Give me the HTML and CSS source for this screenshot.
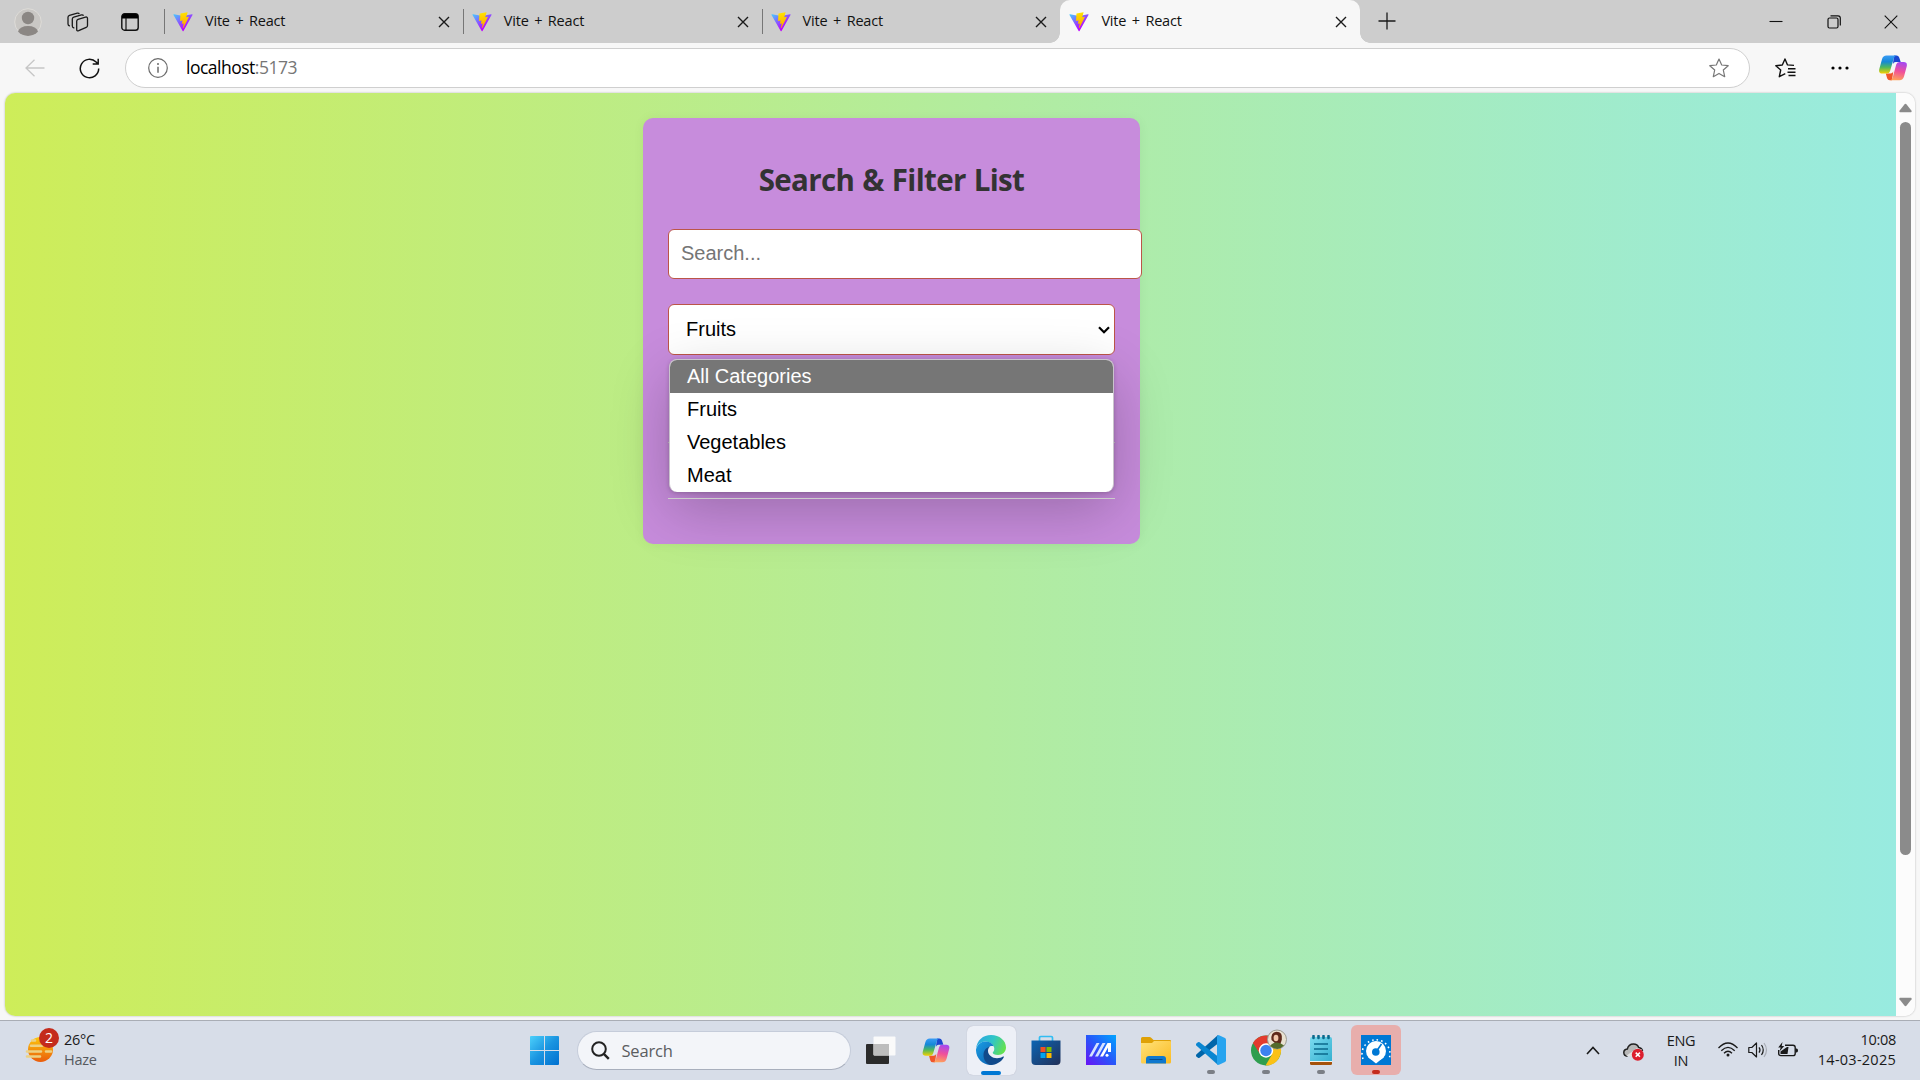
FILE: index.html
```html
<!DOCTYPE html>
<html lang="en">
<head>
<meta charset="utf-8">
<title>Vite + React</title>
<link rel="stylesheet" href="styles.css">
</head>
<body>
<svg class="defs" width="0" height="0">
  <defs>
    <linearGradient id="viteA" x1="6" y1="33" x2="235" y2="344" gradientUnits="userSpaceOnUse"><stop stop-color="#41d1ff"/><stop offset="1" stop-color="#bd00ff"/></linearGradient>
    <linearGradient id="viteB" x1="194" y1="9" x2="236" y2="292" gradientUnits="userSpaceOnUse"><stop stop-color="#ffea00"/><stop offset=".1" stop-color="#ffdd00"/><stop offset="1" stop-color="#ffa800"/></linearGradient>
    <linearGradient id="copA" x1="0" y1="0" x2="0" y2="1"><stop stop-color="#3a9cf5"/><stop offset=".35" stop-color="#1588d8"/><stop offset=".65" stop-color="#4cb860"/><stop offset="1" stop-color="#f5d000"/></linearGradient>
    <linearGradient id="copB" x1=".6" y1="0" x2=".4" y2="1"><stop stop-color="#a548f0"/><stop offset=".5" stop-color="#f0509a"/><stop offset="1" stop-color="#ffa35a"/></linearGradient>
    <linearGradient id="winG" x1="0" y1="0" x2="1" y2="1"><stop stop-color="#4cd0fb"/><stop offset=".5" stop-color="#1a94e0"/><stop offset="1" stop-color="#0070d0"/></linearGradient>
    <linearGradient id="edgeTop" x1="0" y1=".3" x2="1" y2=".6"><stop stop-color="#2ba6e0"/><stop offset=".5" stop-color="#2fc5c8"/><stop offset="1" stop-color="#66e24a"/></linearGradient>
    <linearGradient id="edgeLow" x1="0" y1="0" x2="1" y2="1"><stop stop-color="#1b9fe5"/><stop offset="1" stop-color="#0a57a8"/></linearGradient>
    <linearGradient id="storeG" x1="0" y1="0" x2="1" y2="1"><stop stop-color="#0b65b4"/><stop offset="1" stop-color="#223058"/></linearGradient>
    <linearGradient id="asusG" x1="1" y1="0" x2="0" y2="1"><stop stop-color="#00a5ff"/><stop offset=".5" stop-color="#2757fa"/><stop offset="1" stop-color="#6a12f5"/></linearGradient>
    <linearGradient id="foldG" x1="0" y1="0" x2="1" y2="1"><stop stop-color="#ffe27a"/><stop offset="1" stop-color="#fbbb22"/></linearGradient>
    <linearGradient id="noteG" x1="0" y1="0" x2="1" y2="1"><stop stop-color="#7cdcf0"/><stop offset="1" stop-color="#35b0d0"/></linearGradient>
    <linearGradient id="sunG" x1="0" y1="0" x2="0" y2="1"><stop stop-color="#fdc70c"/><stop offset="1" stop-color="#ea5c0c"/></linearGradient>
    <symbol id="vite" viewBox="0 0 410 404">
      <path fill="url(#viteA)" d="M399.641 59.5246L215.643 388.545C211.844 395.338 202.084 395.378 198.228 388.618L10.5817 59.5563C6.38087 52.1896 12.6802 43.2665 21.0281 44.7586L205.223 77.6824C206.398 77.8924 207.601 77.8904 208.776 77.6763L389.119 44.8058C397.439 43.2894 403.768 52.1434 399.641 59.5246Z"/>
      <path fill="url(#viteB)" d="M292.965 1.5744L156.801 28.2552C154.563 28.6937 152.906 30.5903 152.771 32.8664L144.395 174.33C144.198 177.662 147.258 180.248 150.51 179.498L188.42 170.749C191.967 169.931 195.172 173.055 194.443 176.622L183.18 231.775C182.422 235.487 185.907 238.661 189.532 237.56L212.947 230.446C216.577 229.344 220.065 232.527 219.297 236.242L201.398 322.875C200.278 328.294 207.486 331.249 210.492 326.603L212.5 323.5L323.454 102.072C325.312 98.3645 322.108 94.137 318.036 94.9228L279.014 102.454C275.347 103.161 272.227 99.746 273.262 96.1583L298.731 7.86689C299.767 4.27314 296.636 0.855181 292.965 1.5744Z"/>
    </symbol>
    <symbol id="copilot" viewBox="0 0 28 26">
      <path fill="#1b48d0" d="M15 .5h2.500q2 0 2.700 2l1.500 4.500h-5q-2 0-2.800 2z"/>
      <path fill="#f0562a" d="M13 25.300h-2.200q-2 0-2.700-2L6.800 18.500h4.700q2 0 2.800-2z"/>
      <path fill="url(#copA)" d="M7.500.5h10q-2 .4-2.700 2.800L11 16.200q-.8 2.300-3.200 2.300H3.300Q-.8 18.500.3 14L3 4.200Q4 .5 7.500.5z"/>
      <path fill="url(#copB)" d="M20.500 25.300H11q2-.4 2.700-2.800L17.200 9.500q.7-2.500 3.200-2.500h4.300q4 0 3 4.500L25 21.600q-1 3.700-4.500 3.700z"/>
    </symbol>
    <symbol id="close" viewBox="0 0 12 12"><path d="M1 1l10 10M11 1L1 11" stroke="#1a1a1a" stroke-width="1.400" fill="none"/></symbol>
  </defs>
</svg>

<header class="tabstrip">
  <div class="strip-tools">
    <svg class="avatar" viewBox="0 0 28 28"><circle cx="14" cy="14" r="13.300" fill="#c9c7c4" stroke="#dedcd8"/><circle cx="14" cy="10" r="6.200" fill="#8b8784"/><path d="M4 23.500q2-5.500 10-5.500t10 5.500A13.500 13.500 0 0 1 4 23.500z" fill="#8b8784"/></svg>
    <svg class="workspaces" viewBox="0 0 22 20" fill="none" stroke="#1a1a1a" stroke-width="1.300" stroke-linejoin="round"><path d="M9.700 9.300q0-1.500 1.300-2l7.500-2.200q2-.5 2 1.300v7q0 1.500-1.300 2l-7.500 3.300q-2 .7-2-1.300z"/><path d="M16.500 3.800q-.4-1.200-2-.9L6.800 5.200Q5.300 5.700 5.300 7.100V14q0 1.700 2 2"/><path d="M12.300 2q-.5-1.200-2-.9L2.500 3.300Q1 3.800 1 5.300V12q0 1.500 1.800 2"/></svg>
    <svg class="tabmenu" viewBox="0 0 18 18"><rect x=".8" y=".8" width="16.400" height="16.400" rx="2.800" fill="none" stroke="#111" stroke-width="1.400"/><path d="M1 5.500V3Q1 1 3 1h12q2 0 2 2v2.500z" fill="#000"/><path d="M5 5v12" stroke="#111" stroke-width="1.200"/></svg>
  </div>
  <nav class="tabs">
    <div class="tab"><svg class="favicon"><use href="#vite"/></svg><span class="tab-title">Vite + React</span><svg class="tab-close"><use href="#close"/></svg></div>
    <div class="tab"><svg class="favicon"><use href="#vite"/></svg><span class="tab-title">Vite + React</span><svg class="tab-close"><use href="#close"/></svg></div>
    <div class="tab"><svg class="favicon"><use href="#vite"/></svg><span class="tab-title">Vite + React</span><svg class="tab-close"><use href="#close"/></svg></div>
    <div class="tab active"><svg class="favicon"><use href="#vite"/></svg><span class="tab-title">Vite + React</span><svg class="tab-close"><use href="#close"/></svg></div>
  </nav>
  <svg class="newtab" viewBox="0 0 18 18"><path d="M9 .5v17M.5 9h17" stroke="#1a1a1a" stroke-width="1.300"/></svg>
  <div class="window-controls">
    <svg viewBox="0 0 14 14"><path d="M.5 6.500h13" stroke="#111" stroke-width="1.100"/></svg>
    <svg viewBox="0 0 14 14" fill="none" stroke="#111" stroke-width="1.200"><rect x="1" y="3" width="10" height="10" rx="1.500"/><path d="M3.500 .8h7.500q2.300 0 2.300 2.300v7.500"/></svg>
    <svg viewBox="0 0 14 14"><path d="M.7 .7l12.600 12.600M13.300 .7L.7 13.300" stroke="#111" stroke-width="1.100"/></svg>
  </div>
</header>

<div class="toolbar">
  <svg class="back" viewBox="0 0 20 18" fill="none" stroke="#c6c6c6" stroke-width="1.300"><path d="M19.500 9H1M9.500.7L1 9l8.500 8.300"/></svg>
  <svg class="reload" viewBox="0 0 21 21" fill="none" stroke="#111" stroke-width="1.500"><path d="M19.700 10.500a9.200 9.200 0 1 1-2.600-6.400l1.700 1.700M19.200.8v5.200h-5.500"/></svg>
  <div class="address">
    <svg class="info" viewBox="0 0 20 20"><circle cx="10" cy="10" r="9.300" fill="none" stroke="#6b6b6b" stroke-width="1.200"/><path d="M10 8.700v6" stroke="#6b6b6b" stroke-width="1.500"/><circle cx="10" cy="5.900" r="1" fill="#6b6b6b"/></svg>
    <span class="url">localhost<span class="port">:5173</span></span>
    <svg class="star" viewBox="0 0 20 20" fill="none" stroke="#777" stroke-width="1.200" stroke-linejoin="round"><path d="M10 1l2.700 6 6.500.7-4.900 4.300 1.400 6.700L10 15.400l-5.700 3.300L5.700 12 .8 7.700 7.300 7z"/></svg>
  </div>
  <svg class="favs" viewBox="0 0 21 20" fill="none" stroke="#111" stroke-width="1.400" stroke-linejoin="round"><path d="M19 7.400l-6.500-.5L10 1 7.300 7 .8 7.700 5.700 12l-1.400 6.700 6-3M13 10.700h7.500M12.500 14.200h8M13.500 17.500h7"/></svg>
  <svg class="more" viewBox="0 0 18 4"><circle cx="2" cy="2" r="1.600"/><circle cx="9" cy="2" r="1.600"/><circle cx="16" cy="2" r="1.600"/></svg>
  <svg class="copilot"><use href="#copilot"/></svg>
</div>

<div class="viewport">
  <main class="page">
    <section class="card">
      <h2 class="card-title">Search &amp; Filter List</h2>
      <input class="search" type="text" placeholder="Search...">
      <div class="select">
        <span>Fruits</span>
        <svg class="caret" viewBox="0 0 12 8"><path d="M1 1.300l5 5 5-5" fill="none" stroke="#000" stroke-width="2.200"/></svg>
        <ul class="options">
          <li class="option highlighted">All Categories</li>
          <li class="option">Fruits</li>
          <li class="option">Vegetables</li>
          <li class="option">Meat</li>
        </ul>
      </div>
      <div class="list-row"></div>
      <div class="list-row"></div>
    </section>
  </main>
  <div class="scrollbar">
    <svg viewBox="0 0 14 10"><path d="M1 9.500q-1-.3-.5-1.500L5.800 1.100q1.200-1.200 2.400 0L13.500 8q.5 1.200-.5 1.500z" fill="#8b8b8b"/></svg>
    <div class="thumb"></div>
    <svg class="down" viewBox="0 0 14 10"><path d="M1 .5Q0 .8.500 2l5.300 6.900q1.200 1.200 2.400 0L13.500 2q.5-1.200-.5-1.500z" fill="#8b8b8b"/></svg>
  </div>
</div>

<footer class="taskbar">
  <div class="weather">
    <svg class="sun" viewBox="0 0 35 36"><circle cx="15.500" cy="21.500" r="12.500" fill="url(#sunG)"/><g fill="none" stroke="#edd183" stroke-width="2.600" stroke-linecap="round"><path d="M7 12.500h3M6 17.800h11M2 23.500h14M21 23.500h5M2 28.500h13"/></g><circle cx="24" cy="10" r="10" fill="#c42b1c"/><text x="24" y="15" text-anchor="middle" class="badge">2</text></svg>
    <div class="weather-text"><span>26°C</span><span class="dim">Haze</span></div>
  </div>
  <div class="apps">
    <div class="app"><svg class="i29" viewBox="0 0 29 29"><path fill="url(#winG)" d="M1 0h13v14H0V1Q0 0 1 0zM15 0h13q1 0 1 1v13H15zM0 15h14v14H1q-1 0-1-1zM15 15h14v13q0 1-1 1H15z"/></svg></div>
    <div class="task-search"><svg viewBox="0 0 19 19"><circle cx="8" cy="8" r="6.800" fill="none" stroke="#222" stroke-width="2"/><path d="M12.800 12.800l5 5" stroke="#222" stroke-width="2.400"/></svg><span>Search</span></div>
    <div class="app"><svg class="i30" viewBox="0 0 30 30"><rect x="0" y="9" width="23" height="20" rx="1" fill="#2b2b2b"/><rect x="7.500" y="1.500" width="22" height="19" rx="1" fill="#fafafa"/><path d="M7.500 9H23v11.500H8.500q-1 0-1-1z" fill="#bdbdbd"/></svg></div>
    <div class="app"><svg class="i28"><use href="#copilot"/></svg></div>
    <div class="app open current"><svg class="i30" viewBox="0 0 30 30"><path fill="url(#edgeTop)" d="M0 14C1 5 7 0 15 0c8.500 0 15 5.500 15 12.500 0 4.500-3.500 7.500-8 7.500-3.500 0-5.300-1.300-5.300-2.300 0-.7 1.600-1.300 1.600-4C18 9.500 14 6.600 9.500 6.600 5 6.600 1.500 9.500 0 14z"/><path fill="url(#edgeLow)" d="M0 14.500C1.200 9.500 5 6.500 9.500 6.500c4 0 7 1.800 8.300 4.700-4-1.200-7.300 1.500-7.300 5.800 0 6 5 10.500 11.500 8.800-2.300 3-5.300 4.200-8 4.200C6 29.700-.3 22.500 0 14.500z"/><path fill="#114a8b" d="M14 11.500c-2 1.700-2 3.300-2 4.500 0 4 4.200 7.200 9 7.200 2.600 0 4.500-.8 6-1.700.7-.3 1.200.2.800.8C25.500 27 20 30 15 30c-5-1-7.500-5.500-7.500-10 0-4.300 2.500-7.500 6.500-8.500z"/></svg></div>
    <div class="app"><svg class="i30" viewBox="0 0 30 30"><path d="M8.500 7V2.800q0-1.300 1.300-1.300h10.400q1.300 0 1.300 1.300V7" fill="none" stroke="#32bdf2" stroke-width="1.700"/><path d="M.5 5.500h29V26q0 4-4 4h-21q-4 0-4-4z" fill="url(#storeG)"/><path fill="#f25022" d="M9.500 12h5v5h-5z"/><path fill="#7fba00" d="M15.500 12h5v5h-5z"/><path fill="#00a4ef" d="M9.500 18h5v5h-5z"/><path fill="#ffb900" d="M15.500 18h5v5h-5z"/></svg></div>
    <div class="app"><svg class="i30" viewBox="0 0 30 30"><path fill="url(#asusG)" d="M0 0h30v30H0z"/><path d="M3 21.500L10.500 8h3L6 21.500zM9 21.500L16.500 8h3L12 21.500z" fill="#d6e2ff"/><path d="M14 21.500L21.500 8H25v9h-3v-4.500l-5 9z" fill="#fff"/><circle cx="21" cy="20.300" r="1.500" fill="#fff"/></svg></div>
    <div class="app"><svg class="i30" viewBox="0 0 30 30"><path d="M0 9V3.500Q0 2 1.500 2h7q1 0 1.700.8L12.500 5H29q1 0 1 1v5H0z" fill="#dfa106"/><path d="M0 8h11l2-2h16q1 0 1 1v20q0 1.500-1.500 1.500h-27Q0 28.500 0 27z" fill="url(#foldG)"/><path d="M5 28.500V24q0-3 3-3h14q3 0 3 3v4.500z" fill="#0f78ce"/><path d="M8.500 24.500h13" stroke="#064d8e"/></svg></div>
    <div class="app open"><svg class="i30" viewBox="0 0 30 30"><path d="M.3 19.500q-.7 1 .1 1.900l1.500 1.400q.8.600 1.700 0L22 8.500V0z" fill="#0065a9"/><path d="M.3 10.500q-.7-1 .1-1.900l1.500-1.400q.8-.6 1.700 0L22 21.500V30z" fill="#0a86d1"/><path d="M22.500 0L29 3q1 .6 1 1.700v20.600q0 1.100-1 1.700l-6.500 3q-1.500-.3-1.500-2V2q0-1.700 1.500-2z" fill="#27a4ef"/></svg></div>
    <div class="app open"><svg class="chrome" viewBox="0 0 36 37"><g transform="translate(0 6.500)"><circle cx="15" cy="15" r="15" fill="#2e9e4f"/><path d="M15 15L2 7.500A15 15 0 0 1 28 7.500z" fill="#e33b2e"/><path d="M15 15L28 7.500A15 15 0 0 1 15 30z" fill="#fbc116"/><path d="M15 8h13.300L21.500 18.500z" fill="#fbc116"/><path d="M2 7.500L9 18.600 15 8z" fill="#e33b2e"/><path d="M8.500 18.500L14.500 30l6.500-11z" fill="#2e9e4f"/><circle cx="15" cy="15" r="7.200" fill="#fff"/><circle cx="15" cy="15" r="5.700" fill="#3b82f0"/></g><circle cx="26" cy="10.500" r="9.500" fill="#e9e2d2" stroke="#9b9b92"/><path d="M20.500 11q-1-8 5-8.300 6.500 0 5.300 8l-1.500 4.500h-4z" fill="#5e2a1b"/><ellipse cx="25" cy="9" rx="2.400" ry="3.300" fill="#f0c7aa"/><path d="M19 17q3-4 7-3.500t7 3q-6 6.500-14 .5z" fill="#536b2c"/></svg></div>
    <div class="app open"><svg class="notepad" viewBox="0 0 22 30"><path d="M0 25h22v3.500q0 1.500-1.500 1.500h-19Q0 30 0 28.500z" fill="#a5520b"/><path d="M0 25h22v2H0z" fill="#f5f2ec"/><path d="M0 4q0-2 2-2h18q2 0 2 2v22H0z" fill="url(#noteG)"/><path d="M4 9h14M4 14h14M4 19h14" stroke="#0b6a8c" stroke-width="1.700"/><path d="M3.500 1v2M8.500 1v2M13.500 1v2M18.500 1v2" stroke="#0b6a8c" stroke-width="2.600" stroke-linecap="round"/></svg></div>
    <div class="app open alert"><svg class="i30" viewBox="0 0 30 30"><path fill="#0078d4" d="M0 0h30v30H0z"/><path d="M2 24A14 14 0 1 1 28 24" fill="none" stroke="#fff" stroke-width="1.600" stroke-dasharray="1.600 3"/><circle cx="15" cy="16" r="10" fill="#fff"/><path d="M7 22l8 6.500 8-6.500z" fill="#fff"/><circle cx="14.800" cy="17" r="3.800" fill="#0078d4"/><path d="M15 17l5.500-8" stroke="#0078d4" stroke-width="1.600"/></svg></div>
  </div>
  <div class="tray">
    <svg class="chev" viewBox="0 0 14 9"><path d="M1 8l6-6.500L13 8" fill="none" stroke="#1a1a1a" stroke-width="1.600"/></svg>
    <svg class="cloud" viewBox="0 0 21 18"><path d="M4.500 13.300Q.8 13 .8 9.600q0-3 3.500-3.500Q5.500 1 10.500 1q4 0 5.200 3.500Q19 5 19.500 8" fill="#b8b8b8" stroke="#222" stroke-width="1.500"/><path d="M3 13l11-8 5 1.500-6 6.500z" fill="#e2e2e2"/><circle cx="14.800" cy="11.700" r="6" fill="#dc1f2e"/><path d="M12.700 9.600l4.200 4.200m0-4.200l-4.200 4.200" stroke="#fff" stroke-width="1.500"/></svg>
    <div class="lang"><span>ENG</span><span>IN</span></div>
    <div class="status">
      <svg class="wifi" viewBox="0 0 20 15" fill="none" stroke="#1a1a1a" stroke-width="1.300"><path d="M.5 6q9.500-10 19 0M3.300 8.700q6.700-6.700 13.400 0M6 11.300q4-4 8 0"/><circle cx="10" cy="13" r="1.500" fill="#1a1a1a" stroke="none"/></svg>
      <svg class="sound" viewBox="0 0 20 16" fill="none" stroke="#1a1a1a" stroke-width="1.200" stroke-linejoin="round"><path d="M.8 5.500h3L8.500 1v14L3.800 10.500h-3z"/><path d="M11 5.300q2 2.700 0 5.400M13.500 3q3.500 5 0 10"/><path d="M16 1q5 7 0 14" stroke="#a9adb5"/></svg>
      <svg class="battery" viewBox="0 0 20 16"><path d="M7 3.200h8q2.200 0 2.200 2.200v6q0 2.200-2.200 2.200H2.900Q.7 13.600.7 11.400V8" fill="none" stroke="#1a1a1a" stroke-width="1.400"/><path d="M17.500 6.500h1q1.500 0 1.500 2t-1.500 2h-1z" fill="#1a1a1a"/><path d="M2.500 12V9.500L9 5h1.500L9.500 12z" fill="#1a1a1a"/><path d="M4.500 0L.2 5.500h2.500L1.500 9.500 6.200 4H3.700z" fill="#1a1a1a"/></svg>
    </div>
    <div class="clock"><span>10:08</span><span class="date">14-03-2025</span></div>
  </div>
</footer>
</body>
</html>
```
FILE: styles.css
```css
* { box-sizing: border-box; }
body {
  margin: 0;
  width: 1920px;
  height: 1080px;
  overflow: hidden;
  display: flex;
  flex-direction: column;
  background: #f7f7f7;
  font-family: "Open Sans", "Noto Sans", sans-serif;
  color: #1a1a1a;
}
svg { display: block; flex: none; }
.defs { position: absolute; }

/* tab strip */
.tabstrip { flex: none; height: 43px; display: flex; background: #cdcdcd; }
.strip-tools { width: 164px; display: flex; align-items: center; padding-left: 14px; }
.avatar { width: 28px; height: 28px; }
.workspaces { width: 22px; height: 20px; margin-left: 25px; }
.tabmenu { width: 18px; height: 18px; margin-left: 32px; }
.tabs { display: flex; }
.tab {
  position: relative;
  width: 298.800px;
  display: flex;
  align-items: center;
  padding: 0 13px 0 9px;
}
.tab:not(.active)::before {
  content: "";
  position: absolute;
  left: 0;
  top: 9px;
  width: 1px;
  height: 25px;
  background: #767676;
}
.favicon { width: 20px; height: 20px; }
.tab-title {
  flex: 1;
  margin-left: 12px;
  padding-bottom: 2px;
  font-size: 14.500px;
  line-height: 20px;
  letter-spacing: -.2px;
  word-spacing: 2px;
  color: #111;
}
.tab-close { width: 12px; height: 12px; }
.tab.active { width: 300px; background: #f7f7f7; border-radius: 10px 10px 0 0; }
.tab.active::before, .tab.active::after {
  content: "";
  position: absolute;
  bottom: 0;
  width: 10px;
  height: 10px;
}
.tab.active::before { left: -10px; background: radial-gradient(circle at 0 0, #cdcdcd 9.500px, #f7f7f7 10px); }
.tab.active::after { right: -10px; background: radial-gradient(circle at 100% 0, #cdcdcd 9.500px, #f7f7f7 10px); }
.newtab { width: 18px; height: 18px; margin: 12px 0 0 18px; }
.window-controls { margin-left: auto; display: flex; gap: 43.500px; padding: 14.500px 22px 0 0; }
.window-controls svg { width: 14px; height: 14px; }

/* toolbar */
.toolbar { flex: none; height: 50px; display: flex; align-items: center; padding-left: 25px; }
.back { width: 20px; height: 18px; }
.reload { width: 21px; height: 21px; margin-left: 34px; }
.address {
  width: 1625px;
  height: 40px;
  margin-left: 25px;
  border: 1px solid #cfcfcf;
  border-radius: 20px;
  background: #fff;
  display: flex;
  align-items: center;
  padding: 0 20px 0 22px;
}
.info { width: 20px; height: 20px; }
.url { flex: 1; margin-left: 18px; font-size: 17.500px; letter-spacing: -.5px; padding-bottom: 2px; color: #000; }
.port { color: #767676; }
.star { width: 20px; height: 20px; }
.favs { width: 21px; height: 20px; margin-left: 25px; }
.more { width: 18px; height: 4px; margin-left: 35px; }
.copilot { width: 28px; height: 26px; margin-left: 30px; }

/* viewport */
.viewport {
  flex: none;
  width: 1910px;
  height: 923px;
  margin-left: 5px;
  display: flex;
  border-radius: 10px;
  overflow: hidden;
  box-shadow: 0 0 2px rgba(0, 0, 0, .3);
}
.page {
  width: 1891px;
  padding-top: 25px;
  display: flex;
  align-items: flex-start;
  background: linear-gradient(to right, #ceed59, #98ebe0);
}
.card {
  width: 497px;
  height: 426px;
  margin-left: 638px;
  padding: 25px;
  border-radius: 10px;
  background: #c78cdc;
  box-shadow: 0 0 12px rgba(0, 0, 0, .05);
}
.card-title {
  margin: 16px 0 28px;
  line-height: 42px;
  font-size: 29.500px;
  font-weight: 700;
  text-align: center;
  color: #333;
  letter-spacing: -.65px;
  word-spacing: 1px;
}
.search {
  display: block;
  width: 474px;
  height: 50px;
  padding: 0 12px 1px;
  border: 1px solid #bb5548;
  border-radius: 6px;
  font: 20px "Liberation Sans", Arial, sans-serif;
  background: #fff;
}
.search::placeholder { color: #757575; }
.select {
  position: relative;
  height: 51px;
  margin-top: 25px;
  padding: 0 4px 0 17px;
  display: flex;
  align-items: center;
  justify-content: space-between;
  border: 1px solid #bb5548;
  border-radius: 6px;
  background: #fff;
  color: #000;
  font: 20px "Liberation Sans", Arial, sans-serif;
}
.caret { width: 12px; height: 8px; }
.options {
  position: absolute;
  left: 0;
  top: 54px;
  width: 445px;
  margin: 0;
  padding: 0;
  list-style: none;
  border: 1px solid #c9c3cc;
  border-bottom: 0;
  border-radius: 8px;
  overflow: hidden;
  background: #fff;
  box-shadow: 0 18px 58px rgba(0, 0, 0, .23), 0 1px 4px rgba(0, 0, 0, .2);
}
.option { height: 33px; line-height: 33px; padding-left: 17px; }
.highlighted { background: #767676; color: #fff; }
.list-row { height: 56px; border-bottom: 1px solid #ccc; }
.select + .list-row { height: 88px; }
.list-row:last-child { position: relative; }
.scrollbar {
  width: 19px;
  background: #fcfcfc;
  display: flex;
  flex-direction: column;
  align-items: center;
  padding: 10px 0 9px;
}
.scrollbar svg { width: 13px; height: 10px; }
.thumb { width: 11px; height: 733px; margin-top: 9px; border-radius: 6px; background: #8b8b8b; }
.scrollbar .down { margin-top: auto; }

/* taskbar */
.taskbar {
  height: 60px;
  margin-top: 4px;
  border-top: 1px solid #a9adb5;
  background: #d7dde8;
  display: grid;
  grid-template-columns: 517px 1056px 1fr;
}
.weather { display: flex; padding: 7px 0 0 25px; }
.sun { width: 35px; height: 36px; }
.badge { font: 14px "Open Sans", sans-serif; fill: #fff; }
.weather-text, .lang, .clock {
  display: flex;
  flex-direction: column;
  font-size: 14.500px;
  line-height: 20px;
  letter-spacing: -.3px;
}
.weather-text { margin: 2px 0 0 4px; }
.dim { color: #56595f; }
.apps { display: flex; align-items: center; padding-bottom: 1px; }
.app {
  position: relative;
  width: 55px;
  height: 50px;
  display: flex;
  align-items: center;
  justify-content: center;
}
.i28 { width: 28px; height: 25px; }
.i29 { width: 29px; height: 29px; }
.i30 { width: 30px; height: 30px; }
.open::after {
  content: "";
  position: absolute;
  left: 23.500px;
  bottom: 1px;
  width: 8px;
  height: 4px;
  border-radius: 2px;
  background: #7b7f86;
}
.current { width: 49px; margin: 0 3px; height: 49px; border-radius: 6px; background: #edf0f7; box-shadow: 0 0 1px #aab; }
.current::after { left: 14.500px; width: 20px; bottom: 0; background: #0078d4; }
.alert { width: 50px; margin-left: 2.500px; border-radius: 6px; background: #e8aeac; }
.alert::after { left: 21px; background: #c42b1c; }
.chrome { width: 36px; height: 37px; margin: -6px 0 0 6px; }
.notepad { width: 22px; height: 30px; }
.task-search {
  width: 274px;
  height: 39px;
  margin: 0 3px 0 4.500px;
  display: flex;
  align-items: center;
  padding-left: 13px;
  border: 1px solid #c5ccda;
  border-bottom-color: #a8afbd;
  border-radius: 20px;
  background: #f3f5f9;
  font-size: 16.500px;
  letter-spacing: -.2px;
  color: #5b5d61;
}
.task-search svg { width: 19px; height: 19px; }
.task-search span { margin-left: 12px; }
.tray { display: grid; grid-template-columns: 40px 40px 56px 98px 89px; align-items: center; justify-items: center; }
.chev { width: 14px; height: 9px; }
.cloud { width: 21px; height: 18px; margin-top: 2px; }
.lang { align-items: center; }
.status { display: flex; gap: 10px; align-items: center; padding-bottom: 2px; }
.wifi { width: 20px; height: 15px; }
.sound { width: 20px; height: 16px; }
.battery { width: 20px; height: 16px; }
.clock { align-items: flex-end; justify-self: end; padding-bottom: 1px; }
.date { letter-spacing: .25px; }
```
